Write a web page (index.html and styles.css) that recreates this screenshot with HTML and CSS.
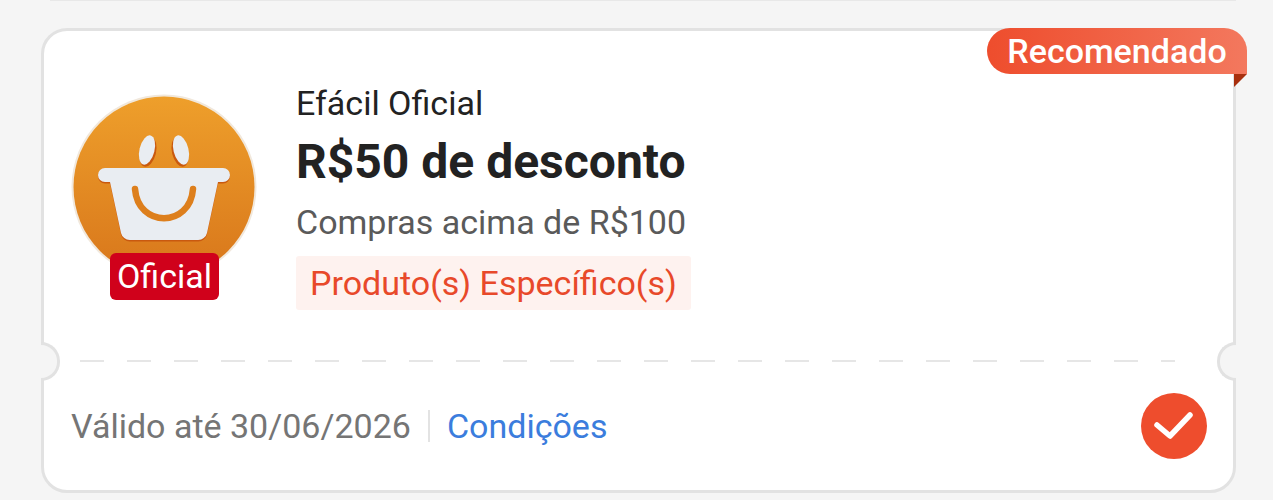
FILE: index.html
```html
<!DOCTYPE html>
<html lang="pt-BR">
<head>
  <meta charset="UTF-8" />
  <title>Cupom</title>
  <link rel="stylesheet" href="styles.css">
</head>
<body>
  <div class="prev-card"></div>

  <div class="voucher">
    <div class="ribbon">Recomendado</div>
    <span class="ribbon-fold"></span>
    <span class="notch notch-left"></span>
    <span class="notch notch-right"></span>

    <div class="voucher-top">
      <div class="logo">
        <svg class="logo-img" viewBox="0 0 186 186" width="186" height="186">
          <defs>
            <linearGradient id="logoBg" x1="0" y1="0" x2="0" y2="1">
              <stop offset="0" stop-color="#ee9f2b"/>
              <stop offset="1" stop-color="#d8761b"/>
            </linearGradient>
          </defs>
          <circle cx="93" cy="93" r="92.500" fill="#f1e8dc"/>
          <circle cx="93" cy="93" r="90.500" fill="url(#logoBg)"/>
          <ellipse cx="77" cy="58" rx="8" ry="15" fill="#c9590f" transform="rotate(14 77 58)"/>
          <ellipse cx="109" cy="58" rx="8" ry="15" fill="#c9590f" transform="rotate(-14 109 58)"/>
          <ellipse cx="76" cy="56" rx="7.500" ry="15" fill="#e9edf2" transform="rotate(14 76 56)"/>
          <ellipse cx="110" cy="56" rx="7.500" ry="15" fill="#e9edf2" transform="rotate(-14 110 56)"/>
          <path d="M34 74H152a7 7 0 0 1 0 14H147L136 139a9 9 0 0 1-9 7H59a9 9 0 0 1-9-7L39 88H34a7 7 0 0 1 0-14Z" fill="#c9590f" transform="translate(0 1.500)"/>
          <path d="M34 74H152a7 7 0 0 1 0 14H147L136 139a9 9 0 0 1-9 7H59a9 9 0 0 1-9-7L39 88H34a7 7 0 0 1 0-14Z" fill="#e9edf2"/>
          <path d="M64 95C67 134 119 134 122 95" fill="none" stroke="#dd7f1d" stroke-width="6.500" stroke-linecap="round"/>
        </svg>
        <span class="logo-badge">Oficial</span>
      </div>
      <div class="info">
        <div class="shop">Efácil Oficial</div>
        <div class="title">R$50 de desconto</div>
        <div class="min-spend">Compras acima de R$100</div>
        <div class="tag">Produto(s) Específico(s)</div>
      </div>
    </div>

    <div class="dashes"></div>

    <div class="voucher-bottom">
      <span class="valid">Válido até 30/06/2026</span>
      <span class="sep"></span>
      <span class="terms">Condições</span>
      <svg class="check" viewBox="0 0 66 66" width="66" height="66">
        <circle cx="33" cy="33" r="33" fill="#ee4d2d"/>
        <path d="M16 32L29 43L49 22" fill="none" stroke="#fff" stroke-width="5.500" stroke-linecap="round" stroke-linejoin="round"/>
      </svg>
    </div>
  </div>
</body>
</html>
```

FILE: styles.css
```css
body {
  margin: 0;
  font-family: 'Roboto', sans-serif;
  background-color: #f5f5f5;
  color: #222;
  height: 500px;
  overflow: hidden;
}
.prev-card {
  height: 1px;
  margin: 0 37px 0 50px;
  background: #e8e8e8;
}
.voucher {
  position: relative;
  box-sizing: border-box;
  width: 1195px;
  height: 465px;
  margin: 27px 0 0 41px;
  background: #fff;
  border: 3px solid #e2e2e2;
  border-radius: 26px;
}
.ribbon {
  position: absolute;
  top: -3px;
  right: -14px;
  box-sizing: border-box;
  width: 260px;
  height: 46px;
  line-height: 46px;
  text-align: center;
  font-size: 34px;
  font-weight: 500;
  color: #fff;
  background: linear-gradient(90deg, #ee4d2d, #f3785e);
  border-radius: 23px 23px 0 23px;
}
.ribbon-fold {
  position: absolute;
  top: 43px;
  right: -14px;
  width: 13px;
  height: 13px;
  background: #a8300f;
  clip-path: polygon(0 0, 100% 0, 0 100%);
}
.notch {
  position: absolute;
  top: 311px;
  box-sizing: border-box;
  width: 19px;
  height: 39px;
  background: #f5f5f5;
  border: 3px solid #e2e2e2;
}
.notch-left {
  left: -3px;
  border-left: none;
  border-radius: 0 20px 20px 0;
}
.notch-right {
  right: -3px;
  border-right: none;
  border-radius: 20px 0 0 20px;
}
.voucher-top {
  display: flex;
  height: 329px;
  box-sizing: border-box;
  padding: 63px 0 0 27px;
}
.logo {
  position: relative;
  width: 186px;
  height: 207px;
  margin-right: 39px;
}
.logo-img {
  display: block;
}
.logo-badge {
  position: absolute;
  left: 39px;
  top: 159px;
  width: 109px;
  height: 47px;
  line-height: 46px;
  text-align: center;
  font-size: 34px;
  color: #fff;
  background: #d0011b;
  border-radius: 6px;
}
.info {
  display: flex;
  flex-direction: column;
  align-items: flex-start;
  margin-top: -13px;
}
.shop {
  font-size: 34px;
  line-height: 44px;
}
.title {
  margin-top: 7px;
  font-size: 48px;
  font-weight: 700;
  line-height: 60px;
}
.min-spend {
  margin-top: 8px;
  font-size: 34px;
  line-height: 44px;
  color: #5a5a5a;
}
.tag {
  margin-top: 12px;
  padding: 0 14px;
  font-size: 34px;
  line-height: 54px;
  color: #e8492a;
  background: #fef2ef;
  border-radius: 3px;
}
.dashes {
  height: 2px;
  margin: 0 58px 0 36px;
  background: repeating-linear-gradient(90deg, #e6e6e6 0, #e6e6e6 24px, transparent 24px, transparent 47px);
}
.voucher-bottom {
  display: flex;
  align-items: center;
  padding: 31px 26px 0 27px;
  font-size: 34px;
}
.valid {
  color: #757575;
}
.sep {
  width: 2px;
  height: 32px;
  margin: 0 17px;
  background: #e3e3e3;
}
.terms {
  color: #3b7ddd;
}
.check {
  margin-left: auto;
}
```
